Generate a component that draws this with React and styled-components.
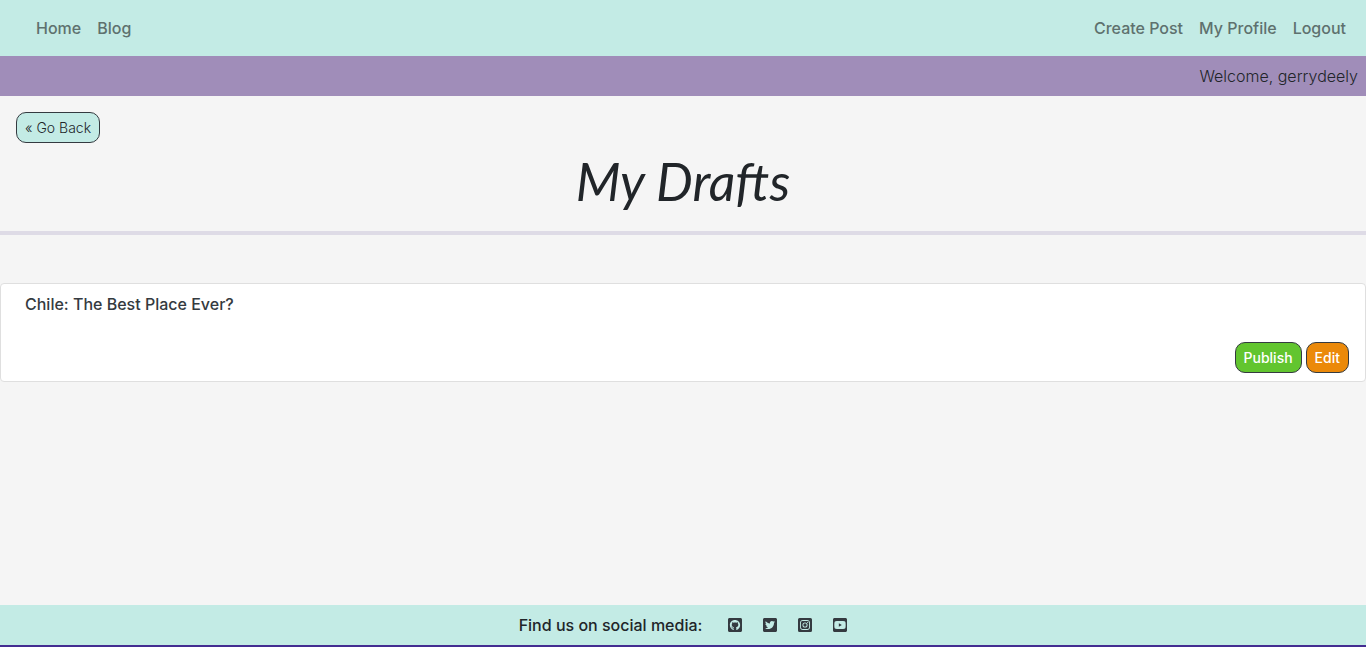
import React from "react";
import styled, { createGlobalStyle } from "styled-components";
import {
  FaGithubSquare,
  FaTwitterSquare,
  FaInstagramSquare,
  FaYoutubeSquare,
} from "react-icons/fa";

const GlobalStyle = createGlobalStyle`
  *, *::before, *::after { box-sizing: border-box; }
  body {
    margin: 0;
    background: #f5f5f5;
    color: #212529;
    font-family: Inter, "Liberation Sans", sans-serif;
    font-size: 16px;
    line-height: 24px;
  }
`;

const Page = styled.div`
  display: flex;
  flex-direction: column;
  min-height: 100vh;
`;

const NavBar = styled.nav`
  display: flex;
  justify-content: space-between;
  padding: 8px 12px 8px 28px;
  background: #c3ebe5;
`;

const NavGroup = styled.div`
  display: flex;
`;

const NavLink = styled.a`
  padding: 8px;
  color: #5e716e;
  font-weight: 500;
  text-decoration: none;
`;

const WelcomeBar = styled.div`
  padding: 8px;
  background: #a08db9;
  font-weight: 300;
  text-align: right;
`;

const Main = styled.main`
  flex: 1;
`;

const Button = styled.button`
  padding: 4px 8px;
  border: 1px solid #343a40;
  border-radius: 10px;
  background: ${({ $fill }) => $fill};
  color: ${({ $ink }) => $ink || "#ffffff"};
  font-family: inherit;
  font-size: 14px;
  font-weight: ${({ $weight }) => $weight || 500};
  line-height: 21px;
  cursor: pointer;
`;

const BackRow = styled.div`
  display: flex;
  padding: 16px 16px 0;
`;

const Title = styled.h1`
  margin: 0;
  padding: 4px 0 16px;
  border-bottom: 4px solid #dedbe6;
  font-family: Lato, "Liberation Sans", sans-serif;
  font-size: 52px;
  font-style: italic;
  font-weight: 400;
  line-height: 68px;
  text-align: center;
`;

const DraftCard = styled.article`
  margin-top: 48px;
  padding: 8px 16px;
  border: 1px solid #dfdfdf;
  border-radius: 4px;
  background: #ffffff;
`;

const DraftLink = styled.a`
  display: block;
  padding: 0 8px;
  color: #343a40;
  font-weight: 500;
  text-decoration: none;
`;

const Actions = styled.div`
  display: flex;
  justify-content: flex-end;
  gap: 4px;
  padding-top: 26px;
`;

const Footer = styled.footer`
  display: flex;
  align-items: center;
  justify-content: center;
  gap: 26px;
  padding: 8px;
  border-bottom: 2px solid #432d91;
  background: #c3ebe5;
  font-weight: 500;
`;

const SocialLinks = styled.div`
  display: flex;
  gap: 21px;
`;

const SocialLink = styled.a`
  display: flex;
  color: #343a40;

  svg {
    width: 14px;
    height: 16px;
  }
`;

const socials = [
  { name: "GitHub", Icon: FaGithubSquare },
  { name: "Twitter", Icon: FaTwitterSquare },
  { name: "Instagram", Icon: FaInstagramSquare },
  { name: "YouTube", Icon: FaYoutubeSquare },
];

export default function App() {
  return (
    <Page>
      <GlobalStyle />
      <NavBar>
        <NavGroup>
          <NavLink href="#home">Home</NavLink>
          <NavLink href="#blog">Blog</NavLink>
        </NavGroup>
        <NavGroup>
          <NavLink href="#create">Create Post</NavLink>
          <NavLink href="#profile">My Profile</NavLink>
          <NavLink href="#logout">Logout</NavLink>
        </NavGroup>
      </NavBar>
      <WelcomeBar>Welcome, gerrydeely</WelcomeBar>
      <Main>
        <BackRow>
          <Button type="button" $fill="#c3ebe5" $ink="#212529" $weight={300}>
            « Go Back
          </Button>
        </BackRow>
        <Title>My Drafts</Title>
        <DraftCard>
          <DraftLink href="#draft">Chile: The Best Place Ever?</DraftLink>
          <Actions>
            <Button type="button" $fill="#62c52f">Publish</Button>
            <Button type="button" $fill="#eb8909">Edit</Button>
          </Actions>
        </DraftCard>
      </Main>
      <Footer>
        <span>Find us on social media:</span>
        <SocialLinks>
          {socials.map(({ name, Icon }) => (
            <SocialLink key={name} href={"#" + name.toLowerCase()} aria-label={name}>
              <Icon />
            </SocialLink>
          ))}
        </SocialLinks>
      </Footer>
    </Page>
  );
}
